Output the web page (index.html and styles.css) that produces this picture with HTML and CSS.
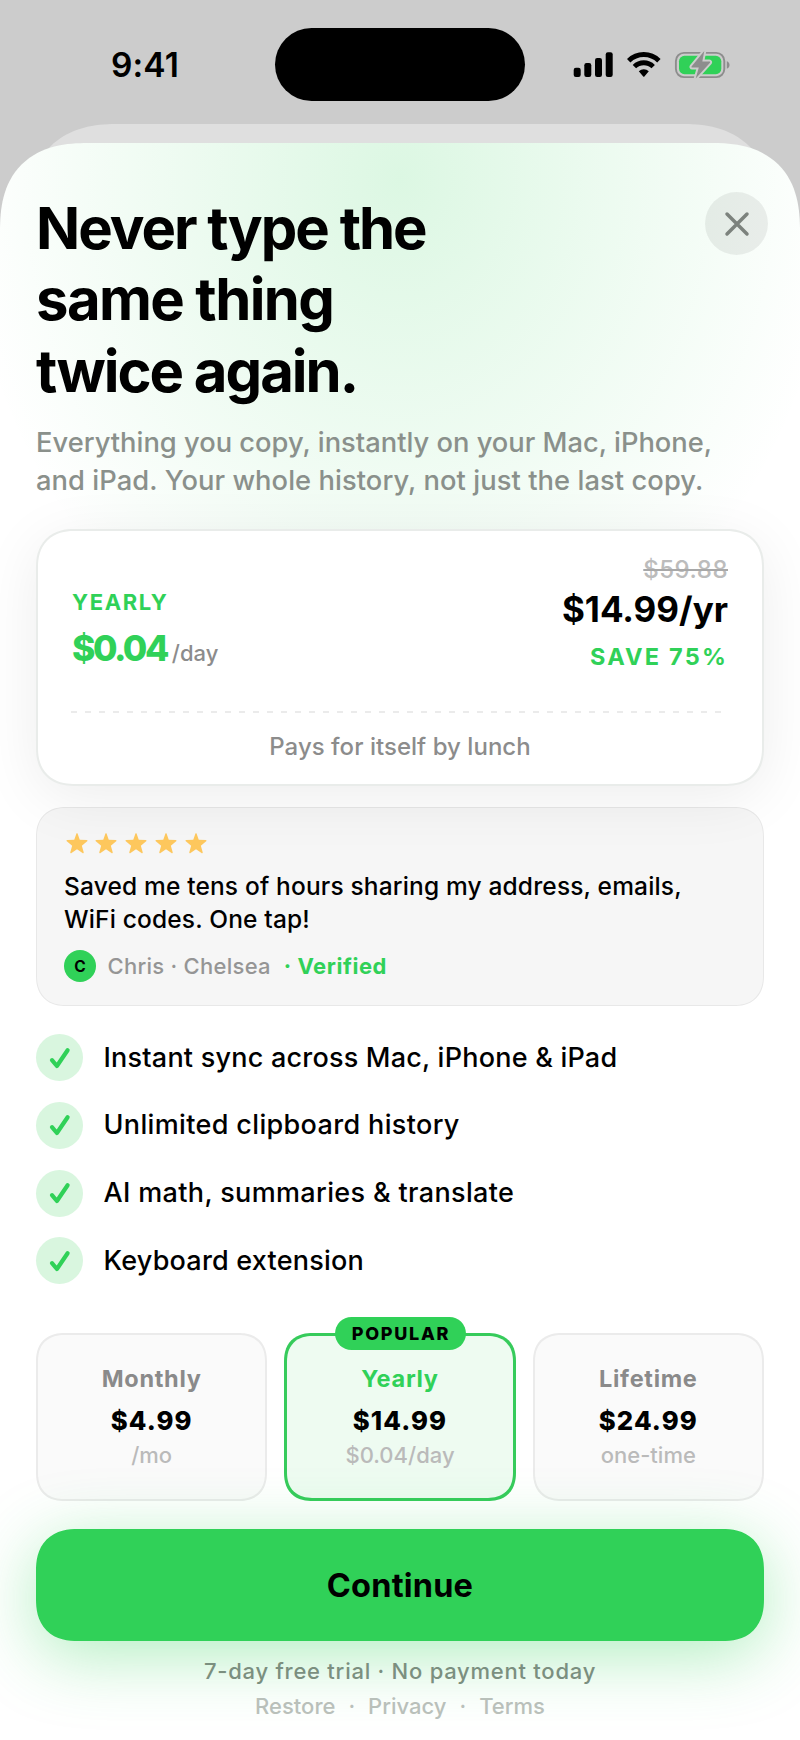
FILE: index.html
```html
<!DOCTYPE html>
<html lang="en">
<head>
<meta charset="utf-8">
<title>Upgrade</title>
<link rel="stylesheet" href="styles.css">
</head>
<body>
<svg width="0" height="0" class="defs" aria-hidden="true">
  <symbol id="star" viewBox="0 0 24 24"><path d="M12.600 1.700l2.400 6.700 7.600.3c.9 0 1.200.9.500 1.500l-5.800 4.700 2 7.100c.2.900-.6 1.400-1.300.9L12 18.800l-6 4.100c-.7.500-1.500 0-1.300-.9l2-7.100L.9 10.200c-.7-.6-.4-1.500.5-1.500l7.600-.3 2.400-6.700c.2-.6 1-.6 1.200 0z" fill="#fdc75d"/></symbol>
  <symbol id="check" viewBox="0 0 24 24"><path d="M4 14.200l4.900 5.800L19.600 4.200" fill="none" stroke="#30d158" stroke-width="4.200" stroke-linecap="round" stroke-linejoin="round"/></symbol>
</svg>
<main class="phone">
  <header class="status">
    <span class="time">9:41</span>
    <span class="island"></span>
    <svg class="indicators" width="158" height="30" viewBox="0 0 158 30">
      <g fill="#000">
        <rect x="1.700" y="17.700" width="7" height="9.300" rx="2.200"/>
        <rect x="12.300" y="13" width="7" height="14" rx="2.200"/>
        <rect x="23" y="8" width="7" height="19" rx="2.200"/>
        <rect x="33.700" y="2.300" width="7" height="24.700" rx="2.200"/>
      </g>
      <g fill="none" stroke="#000" stroke-width="4.800">
        <path d="M56.700 10.700A21.500 21.500 0 0 1 86.900 10.700"/>
        <path d="M62.400 16.600A13.400 13.400 0 0 1 81.200 16.600"/>
      </g>
      <path d="M66.800 21.200a7.600 7.600 0 0 1 10 0L72.600 26.300a1 1 0 0 1-1.600 0z"/>
      <rect x="103.900" y="2.900" width="48.400" height="24.200" rx="8" fill="none" stroke="#8d8d8d" stroke-width="1.900"/>
      <path d="M154.800 11.200c3.600 1 3.600 6.400 0 7.400z" fill="#8d8d8d"/>
      <rect x="107" y="5.800" width="42.300" height="18.400" rx="5.500" fill="#30d158"/>
      <path d="M132.300 1L119.700 16.200c-.5.700-.2 1.300.5 1.300h6.600L123.700 28.500 137.800 12.900c.6-.7.300-1.400-.5-1.400h-7z" fill="#8d8d8d" stroke="#ccc" stroke-width="4" stroke-linejoin="round" paint-order="stroke"/>
    </svg>
  </header>
  <div class="stack"></div>
  <section class="sheet">
    <div class="top">
      <h1 class="title">Never type the<br><span class="looser">same thing</span><br>twice again.</h1>
      <button class="close" aria-label="Close"><svg width="26" height="26" viewBox="0 0 26 26"><path d="M3 3l20 20M23 3L3 23" stroke="#7c827d" stroke-width="3.500" stroke-linecap="round"/></svg></button>
    </div>
    <p class="subtitle">Everything you copy, instantly on your Mac, iPhone,<br><span class="second">and iPad. Your whole history, not just the last copy.</span></p>

    <div class="offer">
      <div class="offer-main">
        <div class="offer-left">
          <div class="eyebrow">YEARLY</div>
          <div class="perday"><span class="amount">$0.04</span><span class="unit">/day</span></div>
        </div>
        <div class="offer-right">
          <div class="was">$59.88</div>
          <div class="now">$14.99/yr</div>
          <div class="save">SAVE 75%</div>
        </div>
      </div>
      <div class="dashes"></div>
      <div class="lunch">Pays for itself by lunch</div>
    </div>

    <div class="review">
      <div class="stars">
        <svg class="star"><use href="#star"/></svg><svg class="star"><use href="#star"/></svg><svg class="star"><use href="#star"/></svg><svg class="star"><use href="#star"/></svg><svg class="star"><use href="#star"/></svg>
      </div>
      <p class="quote">Saved me tens of hours sharing my address, emails,<br>WiFi codes. One tap!</p>
      <div class="author"><span class="avatar">C</span><span class="name">Chris · Chelsea</span><span class="verified">· Verified</span></div>
    </div>

    <ul class="features">
      <li class="feature sync"><span class="tick"><svg class="check"><use href="#check"/></svg></span><span>Instant sync across Mac, iPhone &amp; iPad</span></li>
      <li class="feature"><span class="tick"><svg class="check"><use href="#check"/></svg></span><span>Unlimited clipboard history</span></li>
      <li class="feature"><span class="tick"><svg class="check"><use href="#check"/></svg></span><span>AI math, summaries &amp; translate</span></li>
      <li class="feature sync"><span class="tick"><svg class="check"><use href="#check"/></svg></span><span>Keyboard extension</span></li>
    </ul>

    <div class="plans">
      <div class="plan"><div class="plan-name">Monthly</div><div class="plan-price">$4.99</div><div class="plan-note">/mo</div></div>
      <div class="plan selected"><span class="badge">POPULAR</span><div class="plan-name">Yearly</div><div class="plan-price">$14.99</div><div class="plan-note">$0.04/day</div></div>
      <div class="plan"><div class="plan-name">Lifetime</div><div class="plan-price">$24.99</div><div class="plan-note">one-time</div></div>
    </div>

    <button class="cta">Continue</button>
    <p class="trial">7-day free trial · No payment today</p>
    <nav class="links"><span>Restore</span><span>·</span><span>Privacy</span><span>·</span><span>Terms</span></nav>
  </section>
</main>
</body>
</html>
```
FILE: styles.css
```css
* { box-sizing: border-box; }
body { margin: 0; background: #ccc; font-family: Inter, "Liberation Sans", sans-serif; color: #000; }
h1, p, ul { margin: 0; padding: 0; }
button { border: 0; padding: 0; font-family: inherit; color: inherit; }
.defs { position: absolute; }

.phone { width: 800px; height: 1740px; overflow: hidden; display: flex; flex-direction: column; background: #ccc; }

.status { height: 124px; flex: none; display: grid; grid-template-columns: 275px 250px 275px; padding-top: 27.5px; align-items: start; }
.time { padding: 17px 0 0 111px; font-size: 33.5px; line-height: 40px; font-weight: 600; letter-spacing: .1px; }
.island { height: 73.5px; border-radius: 37px; background: #000; }
.indicators { margin: 22.5px 0 0 47px; }

.stack { flex: none; height: 100px; margin: 0 27px -81px; border-radius: 88px 88px 0 0; corner-shape: superellipse(1.2); background: #dfdfdf; }

.sheet {
  flex: 1; padding: 50px 36px 0; border-radius: 88px 88px 0 0; corner-shape: superellipse(1.3);
  background: radial-gradient(ellipse 440px 530px at 400px 35px, rgba(48, 209, 88, .17), rgba(48, 209, 88, 0)) #fff;
  overflow: hidden; position: relative;
}
.top { display: flex; justify-content: space-between; align-items: flex-start; }
.title { font-size: 58px; line-height: 71.3px; font-weight: 700; letter-spacing: -2px; white-space: nowrap; }
.looser { letter-spacing: -1.6px; }
.close { width: 63px; height: 63px; margin: -1px -4px 0 0; border-radius: 50%; background: rgba(0, 0, 0, .065); display: grid; place-items: center; }
.subtitle { margin-top: 17.5px; font-size: 27.3px; line-height: 37.7px; font-weight: 450; letter-spacing: 0; color: #8a908b; white-space: nowrap; }
.second { letter-spacing: .07px; }

.offer {
  margin-top: 29px; height: 257.5px; border: 2px solid #e9ecea; border-radius: 38px; corner-shape: superellipse(1.2);
  background: #fff; background-clip: padding-box; padding: 25.5px 34px 0 34px; box-shadow: 0 12px 60px rgba(0, 0, 0, .075);
}
.offer-main { display: flex; justify-content: space-between; align-items: flex-end; }
.offer-left { margin-bottom: -3px; }
.eyebrow { font-size: 22px; line-height: 30px; font-weight: 750; letter-spacing: 1.6px; color: #30d158; }
.perday { margin-top: 9px; line-height: 46px; display: flex; align-items: baseline; }
.amount { font-size: 35.5px; font-weight: 800; letter-spacing: -2.5px; color: #30d158; }
.unit { margin-left: 5px; font-size: 22px; font-weight: 500; color: #8c8c8c; }
.offer-right { text-align: right; padding-bottom: 2px; }
.was { font-size: 24px; line-height: 28px; font-weight: 500; letter-spacing: .5px; color: #bcbcbc; text-decoration: line-through; text-decoration-color: #a8a8a8; text-decoration-thickness: 2px; }
.now { margin-top: 4px; font-size: 35px; line-height: 42px; font-weight: 750; letter-spacing: 0; }
.save { margin-top: 13px; font-size: 23.5px; line-height: 28px; font-weight: 750; letter-spacing: 2.2px; color: #30d158; }
.dashes { margin: 37.5px 0 18px -1px; height: 2px; background: repeating-linear-gradient(90deg, #ebebeb 0 6px, transparent 6px 14px); }
.lunch { font-size: 24px; line-height: 32px; font-weight: 450; letter-spacing: .03px; color: #8c8c8c; text-align: center; }

.review { margin-top: 21px; height: 199px; border: 1px solid rgba(0, 0, 0, .06); border-radius: 30px; corner-shape: superellipse(1.2); background: rgba(0, 0, 0, .035); padding: 24px 27px 0; }
.stars { display: flex; gap: 7.8px; padding-left: 1.5px; }
.star { width: 22px; height: 22px; display: block; }
.quote { margin-top: 15.5px; font-size: 24.5px; line-height: 33.6px; font-weight: 450; letter-spacing: .16px; white-space: nowrap; }
.author { margin-top: 13.5px; display: flex; align-items: center; font-size: 22px; line-height: 30px; }
.avatar { width: 32px; height: 32px; border-radius: 50%; background: #30d158; font-size: 15.5px; font-weight: 700; text-align: center; line-height: 33px; }
.name { margin-left: 11.5px; padding-bottom: 1.5px; font-weight: 500; letter-spacing: .27px; color: #959595; }
.verified { margin-left: 13px; padding-bottom: 1.5px; font-weight: 750; letter-spacing: .55px; color: #30d158; }

.features { list-style: none; margin-top: 28px; display: flex; flex-direction: column; gap: 20.7px; }
.feature { display: flex; align-items: center; gap: 20.5px; height: 47px; font-size: 27px; line-height: 36px; font-weight: 450; letter-spacing: .35px; }
.feature.sync { letter-spacing: .22px; }
.tick { width: 47px; height: 47px; border-radius: 50%; background: #d9f6df; display: grid; place-items: center; }
.check { width: 24px; height: 24px; display: block; }

.plans { margin-top: 48.5px; display: grid; grid-template-columns: repeat(3, 1fr); gap: 17px; }
.plan { position: relative; height: 168px; border: 2px solid #ebebeb; border-radius: 29px; corner-shape: superellipse(1.25); background: #fafafa; padding-top: 29px; text-align: center; }
.plan.selected { border: 3px solid #36cb5b; background: #eefbf1; padding-top: 28px; }
.badge { position: absolute; top: -19px; left: 50%; width: 131px; height: 33.5px; margin-left: -65px; border-radius: 17px; background: #30d158; font-size: 18px; line-height: 33px; font-weight: 800; letter-spacing: 1.7px; padding-left: 1px; }
.plan-name { font-size: 23.5px; line-height: 30px; font-weight: 750; letter-spacing: .7px; color: #8a8a8a; }
.selected .plan-name { color: #30d158; }
.plan-price { margin-top: 9px; font-size: 25.7px; line-height: 36px; font-weight: 800; letter-spacing: 1.1px; }
.plan-note { margin-top: 2px; font-size: 22px; line-height: 28px; font-weight: 500; color: #bababa; }

.cta { display: block; width: 100%; height: 112px; margin-top: 28px; padding-top: 1px; border-radius: 42px; corner-shape: superellipse(1.25); background: #30d158; font-size: 32.5px; font-weight: 650; letter-spacing: .2px; box-shadow: 0 14px 68px rgba(48, 209, 88, .38); position: relative; }
.trial { position: relative; margin-top: 15px; font-size: 22px; line-height: 30px; font-weight: 550; letter-spacing: .75px; color: #7b8f7f; text-align: center; }
.links { position: relative; margin-top: 5px; display: flex; justify-content: center; gap: 13px; font-size: 22px; line-height: 30px; font-weight: 500; color: #b9c0ba; }
```
